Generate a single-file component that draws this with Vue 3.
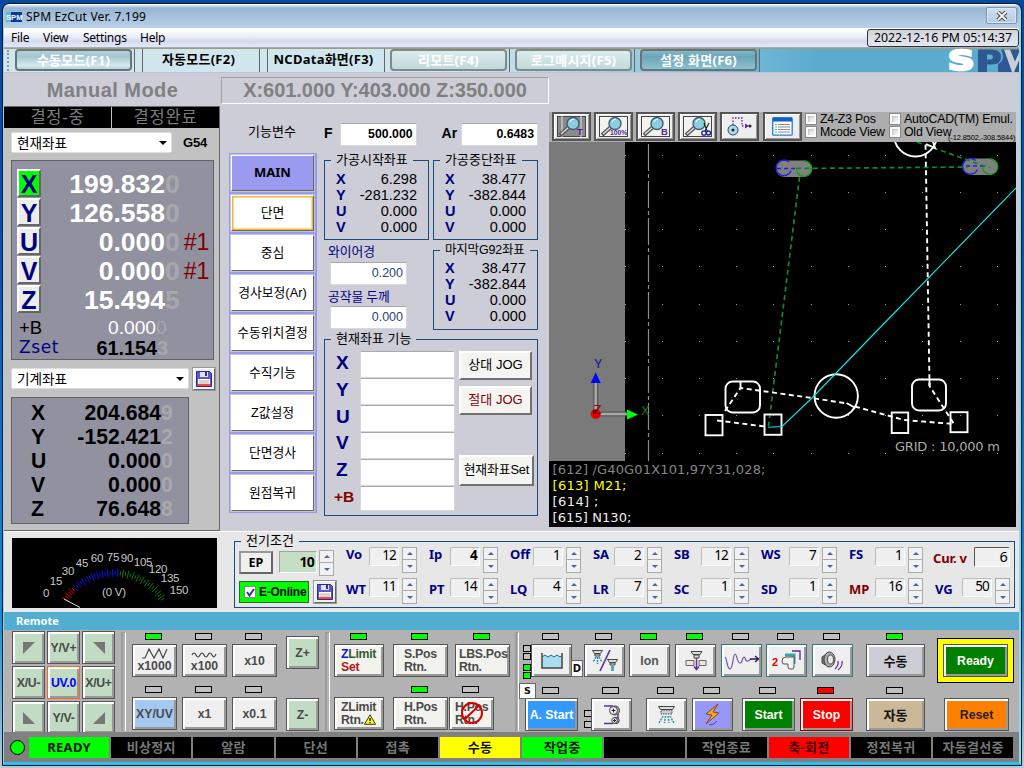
<script setup>
const menus = ['File', 'View', 'Settings', 'Help']
const modes = [
  { t: '수동모드(F1)', k: 'raised' },
  { t: '자동모드(F2)', k: 'flat' },
  { t: 'NCData화면(F3)', k: 'flat' },
  { t: '리모트(F4)', k: 'raised' },
  { t: '로그메시지(F5)', k: 'raised' },
  { t: '설정 화면(F6)', k: 'raised' },
]
const axes = [
  { a: 'X', v: '199.832', d: '0', on: true },
  { a: 'Y', v: '126.558', d: '0' },
  { a: 'U', v: '0.000', d: '0', n: '#1' },
  { a: 'V', v: '0.000', d: '0', n: '#1' },
  { a: 'Z', v: '15.494', d: '5' },
]
const machine = [
  { a: 'X', v: '204.684', d: '9' },
  { a: 'Y', v: '-152.421', d: '2' },
  { a: 'U', v: '0.000', d: '0' },
  { a: 'V', v: '0.000', d: '0' },
  { a: 'Z', v: '76.648', d: '8' },
]
const side = ['MAIN', '단면', '중심', '경사보정(Ar)', '수동위치결정', '수직기능', 'Z값설정', '단면경사', '원점복귀']
const startPos = [['X', '6.298'], ['Y', '-281.232'], ['U', '0.000'], ['V', '0.000']]
const stopPos = [['X', '38.477'], ['Y', '-382.844'], ['U', '0.000'], ['V', '0.000']]
const setAxes = ['X', 'Y', 'U', 'V', 'Z', '+B']
const params1 = [['Vo', '12'], ['Ip', '4'], ['Off', '1'], ['SA', '2'], ['SB', '12'], ['WS', '7'], ['FS', '1'], ['Cur. v', '6']]
const params2 = [['WT', '11'], ['PT', '14'], ['LQ', '4'], ['LR', '7'], ['SC', '1'], ['SD', '1'], ['MP', '16'], ['VG', '50']]
const gx = [625.5, 662.5, 699.5, 736.5, 773.5, 811.5, 848.5, 885.5, 922.5, 960.5, 997.5]
const gy = [155.5, 192.5, 229.5, 266.5, 304.5, 341.5, 378.5, 415.5, 453.5]
const scale = [
  ['0', 46, 597], ['15', 56, 585], ['30', 68, 575], ['45', 82, 567], ['60', 97, 562], ['75', 113, 561],
  ['90', 127, 562], ['105', 143, 566], ['120', 158, 573], ['135', 170, 582], ['150', 179, 594],
]
const ticks = Array.from({ length: 46 }, (_, i) => {
  const a = ((-57 + (114 * i) / 45) * Math.PI) / 180
  const r = i % 2 ? 56 : 54
  const o = i % 2 ? 60 : 62
  return {
    x1: 114 + r * Math.sin(a), y1: 631 - r * Math.cos(a),
    x2: 114 + o * Math.sin(a), y2: 631 - o * Math.cos(a),
    c: i < 6 ? '#f00' : i < 25 ? '#1010f0' : '#087a10',
  }
})
const states = [
  { t: 'READY', c: 'go' }, { t: '비상정지' }, { t: '알람' }, { t: '단선' }, { t: '접촉' }, { t: '수동', c: 'warn' },
  { t: '작업중', c: 'go' }, { t: '' }, { t: '작업종료' }, { t: '축-회전', c: 'bad' }, { t: '정전복귀' }, { t: '자동결선중' },
]
</script>

<template>
  <div class="desk">
    <div class="win">
      <header class="title">
        <svg class="tico" width="17" height="12" viewBox="0 0 17 12"><rect y="1" width="5" height="10" fill="#5ab4dc" /><rect x="5" y="1" width="11" height="10" fill="#0a3c96" /><text x="0" y="9">SPM</text></svg>
        <span class="ttext">SPM EzCut Ver. 7.199</span>
        <span class="close"><svg width="12" height="10" viewBox="0 0 12 10"><path d="M2 1l8 8M10 1l-8 8" stroke="#444c58" stroke-width="4" /><path d="M2 1l8 8M10 1l-8 8" stroke="#f4f4f4" stroke-width="2" /></svg></span>
      </header>
      <nav class="menu">
        <span v-for="m in menus" :key="m" :class="'m-' + m">{{ m }}</span>
        <time class="clock">2022-12-16 PM 05:14:37</time>
      </nav>
      <div class="tools">
        <i class="grip"></i>
        <div v-for="m in modes" :key="m.t" class="mode" :class="m.k"><span>{{ m.t }}</span></div>
        <svg class="logo" width="71" height="25" viewBox="0 0 71 25"><path d="M30 1.500h14q9 0 9 7.500t-9 7.500h-5V24h-9z" fill="#2f5792" /><path d="M39 6.500h3q3 0 3 2.500t-3 2.500h-3z" fill="#5cb0d2" /><path d="M53 1.500h18V24H50V16q5-2 5-7 0-4-2-7.500z" fill="#2f5792" /><path d="M56 1.500h6l5 12 4-9v8L66 24h-2z" fill="#c9ced8" /><text x="0" y="22">S</text></svg>
      </div>

      <main class="main">
        <div class="head">
          <div class="manual">Manual Mode</div>
          <div class="xyz">X:601.000 Y:403.000 Z:350.000</div>
        </div>
        <section class="left">
          <div class="decide"><span>결정-중</span><span>결정완료</span></div>
          <div class="selrow"><div class="select s1">현재좌표<i></i></div><b>G54</b></div>
          <div class="dro">
            <div v-for="r in axes" :key="r.a" class="ax"><span class="axb" :class="{ on: r.on }">{{ r.a }}</span><span class="v">{{ r.v }}</span><span class="d">{{ r.d }}</span><span class="n">{{ r.n }}</span></div>
            <div class="ax bx"><span class="k">+B</span><span class="v">0.000</span><span class="d">0</span></div>
            <div class="ax zs"><span class="k">Zset</span><span class="v">61.154</span><span class="d">3</span></div>
          </div>
          <div class="selrow two"><div class="select s2">기계좌표<i></i></div>
            <span class="save"><svg width="16" height="16" viewBox="0 0 16 16"><path d="M.5.5h13l2 2v13H.5z" fill="#5a5ac8" stroke="#2c2c84" /><path d="M4 1h8v5H4z" fill="#dfe2f2" /><path d="M9 1h2v4H9z" fill="#33338c" /><path d="M2 8h12v7H2z" fill="#fff" /><path d="M3 10h10M3 12h10" stroke="#aaa" /><path d="M2 14h12" stroke="#f00" stroke-width="1.500" /></svg></span>
          </div>
          <div class="mach">
            <div v-for="r in machine" :key="r.a" class="mx"><span class="k">{{ r.a }}</span><span class="v">{{ r.v }}</span><span class="d">{{ r.d }}</span></div>
          </div>
        </section>

        <section class="sidecol">
          <div class="fn">기능변수</div>
          <div class="side"><button v-for="(s, i) in side" :key="s" :class="{ main1: i === 0, sel: i === 1 }">{{ s }}</button></div>
        </section>

        <section class="mid">
          <div class="fa"><b class="f">F</b><span class="inp bold">500.000</span><b class="ar">Ar</b><span class="inp bold">0.6483</span></div>
          <div class="pair">
            <div class="grp"><em>가공시작좌표</em><p v-for="r in startPos" :key="r[0]"><b>{{ r[0] }}</b>{{ r[1] }}</p></div>
            <div class="grp"><em>가공중단좌표</em><p v-for="r in stopPos" :key="r[0]"><b>{{ r[0] }}</b>{{ r[1] }}</p></div>
          </div>
          <div class="pair p2">
            <div class="wire"><label>와이어경</label><span class="inp">0.200</span><label class="l2">공작물 두께</label><span class="inp">0.000</span></div>
            <div class="grp g3"><em>마지막G92좌표</em><p v-for="r in stopPos" :key="r[0]"><b>{{ r[0] }}</b>{{ r[1] }}</p></div>
          </div>
          <div class="grp setg"><em>현재좌표 기능</em>
            <div class="names"><b v-for="a in setAxes" :key="a">{{ a }}</b></div>
            <div class="fields"><i v-for="a in setAxes" :key="a"></i></div>
            <div class="jogs"><span class="jb">상대 JOG</span><span class="jb red">절대 JOG</span><span class="jb set">현재좌표Set</span></div>
          </div>
        </section>

        <section class="cad">
          <div class="cadbar">
            <span v-for="z in ['T', '100%', 'B', 'cut']" :key="z" class="cb">
              <svg width="29" height="21" viewBox="0 0 29 21"><rect x=".5" y=".5" width="28" height="20" :fill="z === 'T' ? '#8a8a8a' : '#f2f2ee'" stroke="#444" /><path v-if="z === 'T'" d="M5 0v21M24 0v21" stroke="#ddd" /><path d="M3 19l9-8" stroke="#555" stroke-width="4" /><path d="M4 18l8-7" stroke="#ddd" stroke-width="1.500" /><circle cx="16" cy="7.500" r="6" fill="#8ccde0" stroke="#3c5f70" stroke-width="1.400" /><path d="M13 6q1-3 4-3" stroke="#fff" fill="none" /><text v-if="z === 'T' || z === 'B'" x="20" y="19" font-size="9.500" fill="#551a9c">{{ z }}</text><text v-if="z === '100%'" x="11" y="19" font-size="6.800" fill="#551a9c">100%</text><g v-if="z === 'cut'" fill="none"><path d="M21 7l3 8M26 7l-4 8" stroke="#222" stroke-width="1.200" /><circle cx="21" cy="17" r="2.200" stroke="#1c1ca8" stroke-width="1.300" /><circle cx="25.500" cy="17" r="2" stroke="#1c1ca8" stroke-width="1.300" /></g></svg>
            </span>
            <span class="cb"><svg width="29" height="21" viewBox="0 0 29 21"><circle cx="8" cy="14" r="5" fill="#a8dce8" stroke="#346" /><circle cx="8" cy="14" r="1.500" fill="#223" /><path d="M8 9V2h9v8h4" fill="none" stroke="#5a2ca0" stroke-width="1.300" stroke-dasharray="1.500 1.500" /><path d="M20 7.500l4 2.500-4 2.500z" fill="#5a2ca0" /><circle cx="25" cy="10" r="1.500" fill="#222" /></svg></span>
            <span class="cb last"><svg width="21" height="19" viewBox="0 0 21 19"><rect x=".7" y=".7" width="19.500" height="17.500" rx="1" fill="#fff" stroke="#2a78d0" stroke-width="1.300" /><path d="M1 1h19v3.500H1z" fill="#0c62c4" /><path d="M3 7.500h2M3 10h2M3 12.500h2M3 15h2" stroke="#3c6" /><path d="M6 7.500h12M6 10h12M6 12.500h12M6 15h12" stroke="#889" /></svg></span>
            <div class="checks"><span><i></i>Z4-Z3 Pos</span><span><i></i>AutoCAD(TM) Emul.</span><span><i></i>Mcode View</span><span><i></i>Old View</span><small>(-12.8502,-308.5844)</small></div>
          </div>
          <svg class="canvas" width="467" height="385" viewBox="549 142 467 385">
            <rect x="549" y="142" width="467" height="385" fill="#000" />
            <rect x="549" y="142" width="76" height="319" fill="#7a7a7a" />
            <g fill="#9a9a9a"><template v-for="y in gy" :key="y"><rect v-for="x in gx" :key="x" :x="x - 0.5" :y="y - 0.5" width="1" height="1" /></template></g>
            <path d="M648.500 144V461" stroke="#8c8c8c" stroke-width="1.200" stroke-dasharray="27 3 4 3" />
            <g fill="#808080"><rect x="776" y="160.500" width="36" height="16.500" rx="8.200" /><rect x="963" y="158.500" width="35" height="16.500" rx="8.200" /></g>
            <g fill="none" stroke-width="1.400"><path d="M789 162a7.800 7.800 0 1 0 2 9M975.500 160.500a7.800 7.800 0 1 0 2 9" stroke="#2222dd" /><path d="M804 161a7.700 7.700 0 1 1-7.500 9M990 159a7.700 7.700 0 1 1-7.500 9" stroke="#10a010" /></g>
            <path d="M777 168.500h18M966 166h18" stroke="#2020e0" stroke-width="1.500" stroke-dasharray="4 3" />
            <path d="M796 168.500L968 167M917 142L990 168M799.500 177L768.500 426" fill="none" stroke="#0a8a30" stroke-width="1.700" stroke-dasharray="5 3.500" />
            <g fill="none" stroke="#fff" stroke-width="1.900">
              <circle cx="915.500" cy="135" r="21.500" /><path d="M926 144l9 4-2-6" />
              <rect x="725.500" y="381.500" width="34.500" height="31" rx="7" /><rect x="912" y="379.500" width="34" height="31" rx="7" /><circle cx="836.200" cy="396" r="21.700" />
              <rect x="705.500" y="415" width="17" height="20.300" /><rect x="764.500" y="414.500" width="17" height="20.300" /><rect x="891.700" y="412.500" width="16.500" height="20.500" /><rect x="950.500" y="412.200" width="17" height="20" />
              <path d="M740.500 382v6M846.500 403l9 5M929.500 380v6" />
              <path d="M717 420.500L765 426.500M725 411L740.500 388L812 398L847 403.500M855 406.500L904 420L954 424L929.500 386V383L925.500 142" stroke-dasharray="5 3.500" />
            </g>
            <path d="M1016 188L868 340L812 398L782 426.500L768 427.300" fill="none" stroke="#10e8f0" stroke-width="1.100" />
            <path d="M595.700 383v31h31" fill="none" stroke="#555" stroke-width="5" /><path d="M595.700 383v31h31" fill="none" stroke="#aaa" stroke-width="2.500" />
            <path d="M595.700 372.500l5 10.500h-10z" fill="#00f" /><path d="M638 414.500l-11 5v-10z" fill="#0f0" /><circle cx="595.700" cy="414" r="5" fill="#e00000" /><path d="M593 410h5l-5 5z" fill="#700" />
            <g class="axt"><text x="594.500" y="367.500" fill="#10109c">Y</text><text x="641.500" y="415" fill="#157a15">X</text><text x="594" y="414" fill="#800">Z</text></g>
            <g class="cadt"><text x="895" y="451" fill="#aaa" textLength="105">GRID : 10,000 m</text><text x="552.500" y="473.500" fill="#858585" textLength="213">[612] /G40G01X101,97Y31,028;</text><text x="552.500" y="489.500" fill="#ff0" textLength="74">[613] M21;</text><text x="552.500" y="505.500" fill="#eee" textLength="46">[614] ;</text><text x="552.500" y="521.500" fill="#eee" textLength="79">[615] N130;</text></g>
          </svg>
        </section>
      </main>

      <section class="elec">
        <svg class="meter" width="205" height="70" viewBox="12 538 205 70">
          <rect x="12" y="538" width="205" height="70" fill="#000" />
          <line v-for="(t, i) in ticks" :key="i" :x1="t.x1" :y1="t.y1" :x2="t.x2" :y2="t.y2" :stroke="t.c" />
          <path d="M64 599l16 8.500" stroke="#ddd" />
          <text v-for="s in scale" :key="s[0]" :x="s[1]" :y="s[2]">{{ s[0] }}</text><text x="114" y="596">(0 V)</text>
        </svg>
        <div class="egrp"><em>전기조건</em>
          <div class="ep">
            <div class="r1"><span class="epb">EP</span><span class="epi">10</span><span class="spin"><i class="u"></i><i></i></span></div>
            <div class="r2"><span class="online"><i><svg width="9" height="9" viewBox="0 0 9 9"><path d="M1 4l2.500 3.500L8 1" fill="none" stroke="#2c3a80" stroke-width="2" /></svg></i>E-Online</span>
              <span class="save"><svg width="16" height="16" viewBox="0 0 16 16"><path d="M.5.5h13l2 2v13H.5z" fill="#5a5ac8" stroke="#2c2c84" /><path d="M4 1h8v5H4z" fill="#dfe2f2" /><path d="M9 1h2v4H9z" fill="#33338c" /><path d="M2 8h12v7H2z" fill="#fff" /><path d="M3 10h10M3 12h10" stroke="#aaa" /><path d="M2 14h12" stroke="#f00" stroke-width="1.500" /></svg></span></div>
          </div>
          <div class="params">
            <div v-for="p in params1" :key="p[0]" class="pc" :class="{ cur: p[0] === 'Cur. v', strong: p[0] === 'Ip' }"><b>{{ p[0] }}</b><span class="pi">{{ p[1] }}</span><span v-if="p[0] !== 'Cur. v'" class="spin"><i class="u"></i><i></i></span></div>
            <div v-for="p in params2" :key="p[0]" class="pc" :class="{ redl: p[0] === 'MP' }"><b>{{ p[0] }}</b><span class="pi">{{ p[1] }}</span><span class="spin"><i class="u"></i><i></i></span></div>
          </div>
        </div>
      </section>

      <div class="remotebar">Remote</div>
      <section class="remote">
        <div class="pad">
          <span class="k"><svg width="12" height="12"><path d="M0 0h12L0 12z" /></svg></span><span class="k">Y/V+</span><span class="k"><svg width="12" height="12"><path d="M0 0h12v12z" /></svg></span>
          <span class="k">X/U-</span><span class="k uv">UV.0</span><span class="k">X/U+</span>
          <span class="k"><svg width="12" height="12"><path d="M0 0v12h12z" /></svg></span><span class="k">Y/V-</span><span class="k"><svg width="12" height="12"><path d="M12 0v12H0z" /></svg></span>
        </div>
        <i class="sep"></i>
        <div class="speed">
          <div class="u"><i class="led on"></i><span class="k two"><svg width="26" height="11" viewBox="0 0 26 11"><path d="M0 10h3l4-9 5 9 5-9 4 9 4-9" fill="none" stroke="#444" stroke-width="1.200" /></svg>x1000</span></div>
          <div class="u"><i class="led"></i><span class="k two"><svg width="27" height="11" viewBox="0 0 27 11"><path d="M1 7q2-4 4 0t4 0 4 0 4 0 4 0 4-1" fill="none" stroke="#444" stroke-width="1.200" /></svg>x100</span></div>
          <div class="u"><i class="led"></i><span class="k">x10</span></div>
          <div class="u"><i class="led"></i><span class="k blue">XY/UV</span></div>
          <div class="u"><i class="led"></i><span class="k">x1</span></div>
          <div class="u"><i class="led"></i><span class="k">x0.1</span></div>
        </div>
        <div class="zz"><span class="k">Z+</span><span class="k">Z-</span></div>
        <i class="sep"></i>
        <div class="pos">
          <div class="row">
            <div class="u w50"><i class="led on"></i><span class="k lt"><span><b class="bl">Z</b><b class="gn">Limit</b><br /><b class="rd">Set</b></span></span></div>
            <div class="u w55"><i class="led on"></i><span class="k lt">S.Pos<br />Rtn.</span></div>
            <div class="u w55"><i class="led on"></i><span class="k lt wide">LBS.Pos<br />Rtn.</span></div>
          </div>
          <div class="row b">
            <div class="u w50"><i class="led hide"></i><span class="k lt"><span>ZLimit<br />Rtn.<svg width="12" height="11" viewBox="0 0 12 11"><path d="M6 .8L11.500 10.300H.5z" fill="#ff0" stroke="#333" /><path d="M6 4v3M6 8v1.200" stroke="#000" stroke-width="1.300" /></svg></span></span></div>
            <div class="u w55"><i class="led on"></i><span class="k lt">H.Pos<br />Rtn.</span></div>
            <div class="u w45"><i class="led"></i><span class="k lt">H.Pos<br />Rtn.<svg class="no" width="24" height="24" viewBox="0 0 24 24"><circle cx="12" cy="12" r="10" fill="none" stroke="#d80000" stroke-width="2" /><path d="M5 18L18.500 5" stroke="#d80000" stroke-width="2" /></svg></span></div>
          </div>
        </div>
        <i class="sep"></i>
        <div class="proc">
          <div class="prow a">
            <div class="mini four"><i></i><i></i><i class="on"></i><i class="on"></i></div>
            <div class="u"><i class="led"></i><span class="k"><svg width="22" height="16" viewBox="0 0 22 16"><path d="M1 4l3-2 3 2 3-2 3 2 3-2 3 2 2-2v13H1z" fill="#a8dcee" /><path d="M1 0v15h20V0" fill="none" stroke="#444" stroke-width="1.500" /><path d="M1 4l3-2 3 2 3-2 3 2 3-2 3 2 2-2" fill="none" stroke="#268" /></svg><small class="dd">D</small></span></div>
            <div class="u"><i class="led"></i><span class="k"><svg width="26" height="23" viewBox="0 0 26 23"><path d="M.5 1.500h10l-2 3h-6zM3 5h5v2H3z" fill="#ddd" stroke="#444" /><path d="M4 8l-3 5M5.500 8v7M7 8l3 5" stroke="#3490b8" stroke-width="1.500" stroke-dasharray="2 1" /><path d="M18 1L8 22" stroke="#60319c" stroke-width="1.700" /><path d="M15.500 10.500h10l-2 3h-6zM18 14h5v2h-5z" fill="#ddd" stroke="#444" /><path d="M20.500 17v5" stroke="#58a8c4" stroke-width="3" /></svg></span></div>
            <div class="u"><i class="led on"></i><span class="k ion">Ion</span></div>
            <div class="u"><i class="led on"></i><span class="k"><svg width="22" height="22" viewBox="0 0 22 22"><path d="M6 1.500h11l-2 3H8zM9 5h5v3H9z" fill="#ddd" stroke="#444" /><path d="M1 10.500h8v5H1zM14 10.500h7v5h-7z" fill="#ece8dc" stroke="#666" /><path d="M11.500 8v11M9 16.500l2.500 3 2.500-3" fill="none" stroke="#60319c" stroke-width="1.500" /></svg></span></div>
            <div class="u"><i class="led"></i><span class="k teal"><svg width="36" height="18" viewBox="0 0 36 18"><path d="M1 5c2 1 2 12 5 12S9 2 11 2s2 9 5 9 2-6 4-6 1 5 4 4l3-2" fill="none" stroke="#7a50b0" stroke-width="1.200" /><path d="M26 7h8M31 4l3.500 3-3.500 3" fill="none" stroke="#2c1458" stroke-width="1.400" /></svg></span></div>
            <div class="u"><i class="led"></i><span class="k teal"><svg width="30" height="21" viewBox="0 0 30 21"><text x="0" y="16" font-size="11" fill="#e00000">2</text><path d="M13 5h9v9" fill="none" stroke="#39a2a8" stroke-width="3" /><path d="M10 11q0-4 4-4h8v10q0 2-2 2h-2q-2 0-2-2v-3h-4q-2 0-2-3z" fill="#f2f2ee" stroke="#555" /><path d="M20 1h8v9" fill="none" stroke="#60319c" stroke-width="1.400" /></svg></span></div>
            <div class="u"><i class="led"></i><span class="k teal"><svg width="23" height="20" viewBox="0 0 23 20"><path d="M1 6L8 1v15l-7-4z" fill="#777" stroke="#444" /><ellipse cx="8.500" cy="8.500" rx="5.500" ry="7.500" fill="#aaa" stroke="#444" /><ellipse cx="9.500" cy="8.500" rx="3" ry="4.500" fill="#e8e8e8" stroke="#444" /><path d="M17 10q1 4-3 8M21 10q1 5-4 9" fill="none" stroke="#60319c" stroke-width="1.300" /></svg></span></div>
            <div class="u wide"><i class="led on"></i><span class="k man">수동</span></div>
          </div>
          <div class="prow b">
            <div class="u start0"><small class="ss">S</small><i class="led"></i><span class="k astart">A. Start</span></div>
            <div class="mini twoled"><i></i><i></i></div>
            <div class="u"><i class="led"></i><span class="k"><svg width="18" height="20" viewBox="0 0 18 20"><path d="M1 1h9M15 4v12M1 18.500h9" fill="none" stroke="#60319c" stroke-width="1.500" /><circle cx="12" cy="5.500" r="4.500" fill="#aaa" stroke="#444" /><circle cx="10.500" cy="5.500" r="4" fill="#eee" stroke="#444" /><circle cx="13" cy="15.500" r="3.200" fill="#aaa" stroke="#444" /><circle cx="11.500" cy="15.500" r="2.800" fill="#eee" stroke="#444" /><path d="M8.500 5.500h4M10.500 3.500v4M10 15.500h3M11.500 14v3" stroke="#222" /></svg></span></div>
            <div class="u"><i class="led"></i><span class="k"><svg width="17" height="19" viewBox="0 0 17 19"><path d="M.5 1.500h16l-2 3h-12z" fill="#ddd" stroke="#444" /><path d="M3 5h11v4H3z" fill="#ccc" stroke="#444" stroke-dasharray="1.500 1" /><path d="M5 11l-4 7M7.500 11l-1 7M10 11l1 7M12 11l4 7" stroke="#3490b0" stroke-width="1.500" stroke-dasharray="2 1" /></svg></span></div>
            <div class="u"><i class="led"></i><span class="k volt"><svg width="17" height="24" viewBox="0 0 17 24"><path d="M14 1L2 11l6 1-6 9 13-11-6-1z" fill="#ffa51e" stroke="#7a4a18" /><path d="M5 22q5 0 8-4" fill="none" stroke="#6030c0" /></svg></span></div>
            <div class="u s53"><i class="led"></i><span class="k green">Start</span></div>
            <div class="u s53"><i class="led stop"></i><span class="k redb">Stop</span></div>
            <div class="u wide"><i class="led"></i><span class="k auto">자동</span></div>
          </div>
        </div>
        <div class="fin"><div class="rdy"><span class="k">Ready</span></div><span class="k reset">Reset</span></div>
      </section>
      <footer class="status"><i></i><span v-for="(s, n) in states" :key="n" :class="s.c">{{ s.t }}</span></footer>
    </div>
  </div>
</template>

<style>
html, body { overflow: hidden; }
</style>
<style scoped>
* { box-sizing: border-box; margin: 0; padding: 0; }
i, em { font-style: normal; }
i, small { display: block; }
svg { display: block; flex: none; }
.desk { width: 1024px; height: 768px; background: linear-gradient(#0848a0, #0a4ea8 30%, #1a8ad0 80%, #b8c8d8); padding: 4px 3px 0 3px; font-family: "Liberation Sans", "Noto Sans CJK KR", sans-serif; font-size: 13px; color: #000; white-space: nowrap; overflow: hidden; }
.win { width: 1018px; height: 761px; border: solid #8fd8f0; border-width: 0 2px 3px 1px; border-bottom-color: #28c0f0; border-radius: 6px 6px 0 0; background: #cdcdd7; display: flex; flex-direction: column; outline: 1px solid #101820; overflow: hidden; }
.title { height: 24px; flex: none; background: linear-gradient(#dcebfa 0, #98b4d0 3px, #b9d1ea); display: flex; align-items: center; padding: 0 2px; font-family: "Noto Sans", sans-serif; font-size: 12px; border-top: 1px solid #fff; }
.tico text { font: bold 7.600px "Liberation Sans"; fill: #fff; }
.ttext { margin-left: 3px; letter-spacing: .18px; }
.close { margin: -2px 0 0 auto; width: 31px; height: 17px; border: 1px solid #8096b4; border-radius: 2px; background: linear-gradient(#d0e0f2, #b4cae2); display: flex; align-items: center; justify-content: center; box-shadow: inset 0 0 0 1px #dce8f4; }
.menu { height: 20px; flex: none; background: linear-gradient(#fff 0, #f4f6fb 30%, #d5dbee 70%, #e3e8f6); border-bottom: 1px solid #a8acb8; display: flex; font: 12px/19px "Noto Sans", sans-serif; padding-left: 7px; letter-spacing: -.25px; }
.m-File { width: 32px; } .m-View { width: 40px; } .m-Settings { width: 57px; }
.clock { margin: 1px 0 0 auto; height: 18px; width: 152px; border: 1px solid #333; border-radius: 3px; background: linear-gradient(#d2d4dc, #e4e6f0); text-align: center; line-height: 16px; font-size: 12.300px; letter-spacing: 0; }
.tools { height: 25px; flex: none; background: linear-gradient(90deg, #d0e7ee 0, #cfe6ee 45%, #9acbdd 62%, #5aaccf 80%, #5aaccf); border-top: 1px solid #a09c80; border-bottom: 1px solid #b8c4d8; display: flex; align-items: center; }
.grip { width: 3px; height: 21px; margin: 0 5px 0 3px; border-left: 2px dotted #8a98a0; }
.mode { width: 125px; height: 23px; display: flex; font: bold 13px/20px "Noto Sans", "Noto Sans CJK KR", sans-serif; letter-spacing: .25px; background: linear-gradient(90deg, transparent 119px, #666 119px, #666 120px, transparent 120px); }
.mode span { width: 117px; height: 22px; text-align: center; }
.mode.raised span { border: 2px solid #65757b; border-radius: 4px; color: #fff; line-height: 18px; background: linear-gradient(#b4d0d8, #a5c6d0 30%, #d6e8ec 80%, #b6d2da); }
.mode:nth-of-type(6) span { background: linear-gradient(#84b8c8, #6aa6b8 30%, #8ec0ce); }
.mode:nth-of-type(4) span, .mode:nth-of-type(5) span { background: linear-gradient(#dcecec, #c2d8da); border-color: #7d8a8c; }
.mode.flat { background: linear-gradient(90deg, transparent 2px, #666 2px, #666 3px, transparent 3px, transparent 119px, #666 119px, #666 120px, transparent 120px); }
.mode.flat span { line-height: 21px; }
.logo { margin-left: auto; overflow: visible; }
.logo text { font: bold 27px "DejaVu Sans"; fill: #fff; stroke: #fff; stroke-width: 2.500px; transform: scaleX(1.350); }

.main { height: 458px; flex: none; display: grid; grid-template: 33px 425px / 225px 95px 225px 467px; }
.head { grid-column: 1 / -1; display: flex; font-weight: bold; font-size: 20px; color: #808080; }
.manual { width: 217px; text-align: center; line-height: 34px; letter-spacing: .45px; }
.xyz { width: 328px; height: 27px; margin-top: 4px; border: 1px solid; border-color: #a0a0a0 #fff #fff #a0a0a0; text-align: center; line-height: 25px; letter-spacing: -.05px; }
.left { width: 216px; background: #c2c2c2; border: solid #666; border-width: 1px 1px 1px 0; }
.decide { display: grid; grid-template-columns: 107px 107px; gap: 1px; background: #c0c0c0; height: 21px; font-size: 16.500px; line-height: 21px; color: #7c7c7c; letter-spacing: .8px; }
.decide span { background: #000; text-align: center; overflow: hidden; }
.selrow { display: flex; padding: 4px 0 0 7px; height: 32px; }
.select { width: 161px; height: 21px; background: #fff; border: 1px solid #ddd; border-radius: 2px; font: 13.600px/19px "Noto Sans CJK KR"; padding-left: 5px; position: relative; }
.select i { position: absolute; right: 4px; top: 8px; border: 4px solid transparent; border-top-color: #000; border-bottom: 0; }
.selrow b { font-size: 13px; line-height: 21px; margin-left: 11px; letter-spacing: -.2px; }
.selrow.two { height: 37px; padding-top: 8px; }
.select.s2 { width: 178px; }
.save { width: 22px; height: 22px; background: #f0f0f0; border: 1px solid #fff; border-color: #fff #666 #666 #fff; display: flex; align-items: center; justify-content: center; box-shadow: 0 0 0 1px #999; }
.selrow .save { margin: 0 0 0 4px; }
.dro { width: 203px; height: 200px; margin-left: 7px; background: #9191a0; border: 1px solid #606068; padding-top: 8px; }
.ax { display: flex; height: 29px; line-height: 31px; align-items: stretch; font-size: 26.500px; font-weight: bold; color: #fff; }
.axb { width: 24px; height: 28px; margin-left: 5px; background: #ececec; border: 2px solid; border-color: #fff #666 #666 #fff; color: #000080; text-align: center; line-height: 26px; font-size: 25px; }
.axb.on { background: #0f0; }
.ax .v { width: 124px; text-align: right; }
.ax .d { color: #a8a8ac; }
.ax .n { font-weight: normal; font-size: 23px; color: #800000; margin-left: 4px; }
.bx { height: 20px; line-height: 27px; font-size: 19.200px; font-weight: normal; }
.bx .k { color: #000; width: 50px; padding-left: 7px; font-size: 18.500px; }
.bx .v { width: 94px; }
.zs { height: 20px; line-height: 29px; font-size: 19.800px; color: #000; }
.zs .k { width: 50px; padding-left: 7px; color: #000080; font: 17px/27px "DejaVu Sans"; letter-spacing: .6px; }
.zs .v { width: 95px; }
.mach { width: 178px; height: 127px; margin-left: 7px; background: #9191a0; border: 1px solid #606068; padding-top: 3px; font-weight: bold; font-size: 21.200px; }
.mx { display: flex; height: 24px; line-height: 24px; }
.mx .k { width: 30px; padding-left: 19px; }
.mx .v { width: 119px; text-align: right; }
.mx .d { color: #aaa; }
.fn { font: 13px/18px "Noto Sans CJK KR"; padding: 16px 0 0 19px; height: 47px; }
.side { width: 88px; height: 360px; background: #9a9af0; padding: 1px 2px 0 1px; display: flex; flex-direction: column; gap: 2px; }
.side button { height: 38px; width: 85px; flex: none; background: #fff; border: 2px solid; border-color: #fff #666 #666 #fff; outline: 1px solid #c4c4cc; outline-offset: -1px; font: 12.800px "Liberation Sans", "Noto Sans CJK KR", sans-serif; padding-bottom: 3px; }
.side .main1 { background: #9a9af0; font: bold 13px "Noto Sans"; }
.side .sel { box-shadow: inset 0 0 0 1.500px #f0b830; }
.mid { width: 214px; }
.fa { display: flex; height: 54px; padding-top: 17px; font-size: 14px; line-height: 21px; }
.f { width: 16px; } .ar { width: 45px; padding-left: 25px; }
.inp { width: 77px; height: 23px; display: block; background: #fff; border: 1px solid #d8d8dc; border-top-color: #a8a8a8; border-radius: 2px; text-align: right; padding-right: 3px; font-size: 12.500px; line-height: 20px; color: #1f4478; flex: none; }
.inp.bold { color: #000; font-weight: bold; font-size: 12.300px; }
.pair { display: flex; justify-content: space-between; height: 90px; }
.grp { width: 105px; height: 80px; border: 1px solid #1a4a80; position: relative; padding: 10px 11px 0 11px; font-size: 14.500px; line-height: 16px; }
.grp > em, .egrp > em { position: absolute; top: -10px; left: 6px; background: #cdcdd7; padding: 0 5px; font: 13px/18px "Liberation Sans", "Noto Sans CJK KR"; }
.grp p { display: flex; justify-content: space-between; height: 16px; }
.grp b { color: #000080; }
.g3 em { font-size: 12.500px; letter-spacing: -.2px; }
.g3 { padding-top: 9px; }
.p2 { height: 89px; }
.wire { padding: 0 0 0 4px; margin-left: 2px; }
.wire label { display: block; height: 12px; margin-left: -2px; font: 12.800px/1px "Noto Sans CJK KR"; color: #000080; }
.wire .l2 { height: 21px; line-height: 21px; }
.grp.setg { width: 214px; height: 177px; padding: 11px 0 0 11px; display: flex; }
.names { width: 24px; display: flex; flex-direction: column; font-size: 19px; }
.names b { height: 26.800px; line-height: 24px; }
.names b:last-child { color: #800000; font-size: 15.500px; margin-left: -2px; }
.fields { width: 95px; }
.fields i { height: 27px; border: 1px solid #d8d8dc; border-top-color: #a8a8a8; background: #fff; border-radius: 2px; }
.fields i:last-child { height: 25px; }
.jogs { margin-left: 4px; }
.jb { display: block; width: 73px; height: 29px; margin-bottom: 6px; background: #f4f4f0; border: 2px solid; border-color: #fff #707070 #707070 #fff; text-align: center; font: 13px/24px "Liberation Sans", "Noto Sans CJK KR"; }
.jb.red { color: #800000; } .jb.set { width: 75px; height: 31px; margin-top: 40px; font-size: 12.800px; line-height: 26px; letter-spacing: -.1px; }
.cad { padding-top: 6px; }
.cadbar { height: 30px; background: #adadad; padding-left: 3px; display: flex; gap: 3px; }
.cb { width: 39px; height: 29px; background: #eee; border: 2px solid #555; box-shadow: inset 1px 1px 0 #fff, inset -1px -1px 0 #999; display: flex; align-items: center; justify-content: center; flex: none; }
.cb.last { margin-left: 1px; }
.cb text { font-family: "Liberation Sans"; font-weight: bold; }
.checks { display: grid; grid-template-columns: 84px 127px; grid-template-rows: 13px 13px; position: relative; padding-top: 1px; font-size: 12.300px; line-height: 13px; letter-spacing: -.2px; }
.checks span { display: flex; }
.checks i { width: 12px; height: 12px; margin-right: 3px; background: #f0f0f0; border: 1px solid #888; box-shadow: inset 0 0 0 2px #fafafa, inset 2px 2px 3px 1px #bbb; }
.checks small { position: absolute; left: 143px; top: 21px; font-size: 7.400px; line-height: 9px; letter-spacing: -.1px; }
.axt { font: 13px "Noto Sans"; }
.cadt { font: 13px "DejaVu Sans"; }

.elec { height: 81px; flex: none; background: #e7e7e7; border-top: 1px solid #fff; padding: 6px 0 0 8px; display: flex; }
.meter text { font: 11.500px "Liberation Sans"; fill: #c8c8c8; text-anchor: middle; letter-spacing: -.2px; }
.egrp { width: 781px; height: 67px; margin: 3px 0 0 17px; border: 1px solid #1a4a80; position: relative; display: flex; }
.egrp > em { background: #e7e7e7; font-size: 13px; }
.ep { width: 111px; padding: 8px 0 0 4px; }
.r1, .r2 { display: flex; }
.r2 { margin-top: 5px; }
.epb { width: 34px; height: 23px; margin-top: 1px; background: #f0f0f0; border: 2px solid #666; border-top-color: #999; border-left-color: #999; text-align: center; font: bold 12.500px/19px "Noto Sans"; }
.epi { width: 38px; height: 22px; margin: 1px 2px 0 6px; background: #c4dfc4; border: 1px solid; border-color: #a0a0a0 #fff #fff #a0a0a0; text-align: right; font: bold 14px/20px "Noto Sans"; letter-spacing: -.8px; padding-right: 2px; }
.spin { width: 15px; height: 26px; display: flex; flex-direction: column; border: 1px solid #aaa; flex: none; }
.spin i { height: 12px; background: #f2f2f2; position: relative; }
.spin .u { border-bottom: 1px solid #aaa; }
.spin i::after { content: ""; position: absolute; left: 3.500px; top: 5px; border: 3px solid transparent; border-top-color: #4a64a4; border-bottom: 0; }
.spin .u::after { transform: scaleY(-1); top: 4px; }
.online { width: 70px; height: 22px; background: #0f0; border: 1px solid #2a6a2a; display: flex; font-weight: bold; font-size: 12px; line-height: 20px; margin-right: 5px; letter-spacing: -.25px; }
.online i { width: 12px; height: 12px; background: #fff; border: 1px solid #888; margin: 4px 3px 0 4px; padding: 1px; }
.params { display: grid; grid-template-columns: 71px 81px 83px 81px 87px 88px 86px 87px; grid-template-rows: 31px 31px; padding-top: 5px; }
.pc { display: flex; }
.pc + .pc { padding-left: 12px; }
.pc:nth-child(9) { padding-left: 0; }
.pc b { flex: 1; font: bold 13px/15px "Noto Sans"; color: #000080; letter-spacing: -.1px; }
.pc:nth-child(n + 9) b { line-height: 22px; }
.pi { width: 30px; height: 19px; border: 1px solid; border-color: #bbb #fff #fff #bbb; border-radius: 2px; background: #f0f0f0; text-align: right; font: 13.500px/15px "Noto Sans"; letter-spacing: -.8px; padding-right: 2px; margin-right: 3px; flex: none; }
.strong .pi { font-weight: bold; }
.cur b { color: #800000; line-height: 23px; letter-spacing: -.2px; margin-left: -2px; } .redl b { color: #800000; }
.cur .pi { width: 36px; height: 20px; font-size: 14.500px; line-height: 17px; margin-right: 0; border-top-color: #555; border-left-color: #555; }

.remotebar { height: 18px; flex: none; background: #51aed1; color: #fff; font: bold 11px/18px "Noto Sans"; padding-left: 12px; }
.remote { height: 102px; flex: none; background: #b2b2b2; display: flex; overflow: hidden; }
.remote .k { display: flex; align-items: center; justify-content: center; background: #efefef; border: 1px solid #555; box-shadow: inset 2px 2px 0 #fff, inset -2px -2px 0 #999; position: relative; height: 33px; color: #4a4a4a; font: bold 12.300px "Liberation Sans", "Noto Sans CJK KR"; }
.pad { display: grid; grid-template: 33px 33px 33px / 33px 33px 33px; gap: 2px; padding: 1px 0 0 8px; }
.remote .pad .k, .remote .zz .k { background: #c2dcc4; }
.remote .pad .k { letter-spacing: -.3px; }
.pad svg { fill: #777; }
.remote .pad .uv { color: #00f; border-color: #f06a30; }
.sep { width: 5px; height: 99px; margin: 2px 0 0 6px; border: solid; border-width: 1px 1px 0 2px; border-color: #999 #fff #fff #9c9c9c; }
.speed { display: grid; grid-template: 53px 44px / 45px 45px 45px; column-gap: 5px; padding: 3px 0 0 6px; }
.u { display: flex; flex-direction: column; align-items: center; gap: 4px; }
.u .k { width: 100%; }
.led { width: 17px; height: 7px; border: 1px solid #000; background: #c0c0c0; margin-right: 2px; flex: none; }
.led.on, .mini .on { background: #0f0; } .led.stop { background: #f00; } .led.hide { visibility: hidden; }
.remote .two { flex-direction: column; }
.remote .blue { background: #a4c8f0; }
.zz { padding: 6px 0 0 9px; display: flex; flex-direction: column; gap: 29px; }
.zz .k { width: 33px; }
.pos { width: 185px; padding: 3px 0 0 4px; }
.pos .row { display: flex; height: 53px; align-items: flex-start; }
.w50 { width: 50px; margin-right: 9px; } .w55 { width: 55px; } .w45 { width: 45px; margin-left: 1px; }
.row .w55:nth-child(3) { margin-left: 7px; }
.remote .lt { justify-content: flex-start; padding-left: 6px; line-height: 12.500px; font-size: 12.300px; background: #f3f3ee; letter-spacing: -.3px; }
.remote .w55 .lt { padding-left: 10px; }
.remote .w55 .lt.wide { padding-left: 3px; }
.remote .w45 .lt { padding-left: 5px; }
.lt svg { display: inline-block; vertical-align: -1px; }
.lt .no { position: absolute; left: 10px; top: 3px; }
.bl { color: #1010e8; } .gn { color: #345c34; } .rd { color: #b01818; }
.pos + .sep { margin-left: 0; flex: none; width: 4px; }
.proc { width: 418px; padding-top: 3px; flex: none; }
.prow { display: grid; }
.prow.a { grid-template-columns: 12px 53px 45px 46px 46px 45px 46px 54px 59px; height: 54px; }
.prow.b { grid-template-columns: 59px 7px 55px 46px 50px 58px 66px 59px; height: 45px; padding-left: 6px; }
.prow .u { width: 41px; }
.prow .u.wide { width: 59px; } .prow .u.s53, .prow .u.start0 { width: 53px; position: relative; }
.mini i { width: 8px; height: 7px; border: 1px solid #000; margin-bottom: 1px; background: #c0c0c0; }
.mini { margin-left: 4px; padding-top: 12px; }
.four i:nth-child(3) { margin-top: 4px; }
.twoled { margin-left: 0; padding-top: 23px; } .twoled i + i { margin-top: 4px; }
.dd, .ss { position: absolute; background: #fafafa; border: 1px solid #666; color: #111; text-align: center; }
.dd { left: 39px; top: 15px; width: 12px; height: 17px; font: bold 10px/15px "DejaVu Sans"; z-index: 1; }
.ss { left: -6px; top: -4px; width: 17px; height: 16px; font: bold 9.500px/14px "DejaVu Sans"; z-index: 1; }
.remote .teal { border-color: #367878; }
.remote .man { background: #cdcdd7; color: #111; font-size: 13px; } .remote .auto { background: #cab898; color: #111; font-size: 13px; }
.remote .astart { background: #3399ff; color: #fff; }
.remote .volt { background: #9898fa; } .remote .green { background: #008000; color: #fff; } .remote .redb { background: #f00; color: #fff; border-color: #900; }
.remote .ion { color: #555; }
.fin { padding-top: 8px; }
.rdy { width: 77px; height: 45px; background: #ff0; border: 1px solid #000; padding: 5px; }
.remote .rdy .k { background: #008000; color: #fff; }
.remote .reset { width: 65px; margin: 15px 0 0 7px; background: #ff8000; color: #222; }
.status { height: 30px; flex: none; background: #808080; display: flex; gap: 2px; padding: 5px 0 0 6px; font: bold 13px/20px "Noto Sans", "Noto Sans CJK KR"; }
.status > i { width: 15px; height: 15px; border-radius: 50%; background: #0f0; border: 1px solid #000; margin: 3px 2px 0 0; }
.status span { width: 80.200px; height: 21px; background: #000; color: #777; text-align: center; flex: none; letter-spacing: .3px; }
.status .go { background: #0f0; color: #111; } .status .warn { background: #ff0; color: #111; } .status .bad { background: #f00; color: #400; }
</style>
